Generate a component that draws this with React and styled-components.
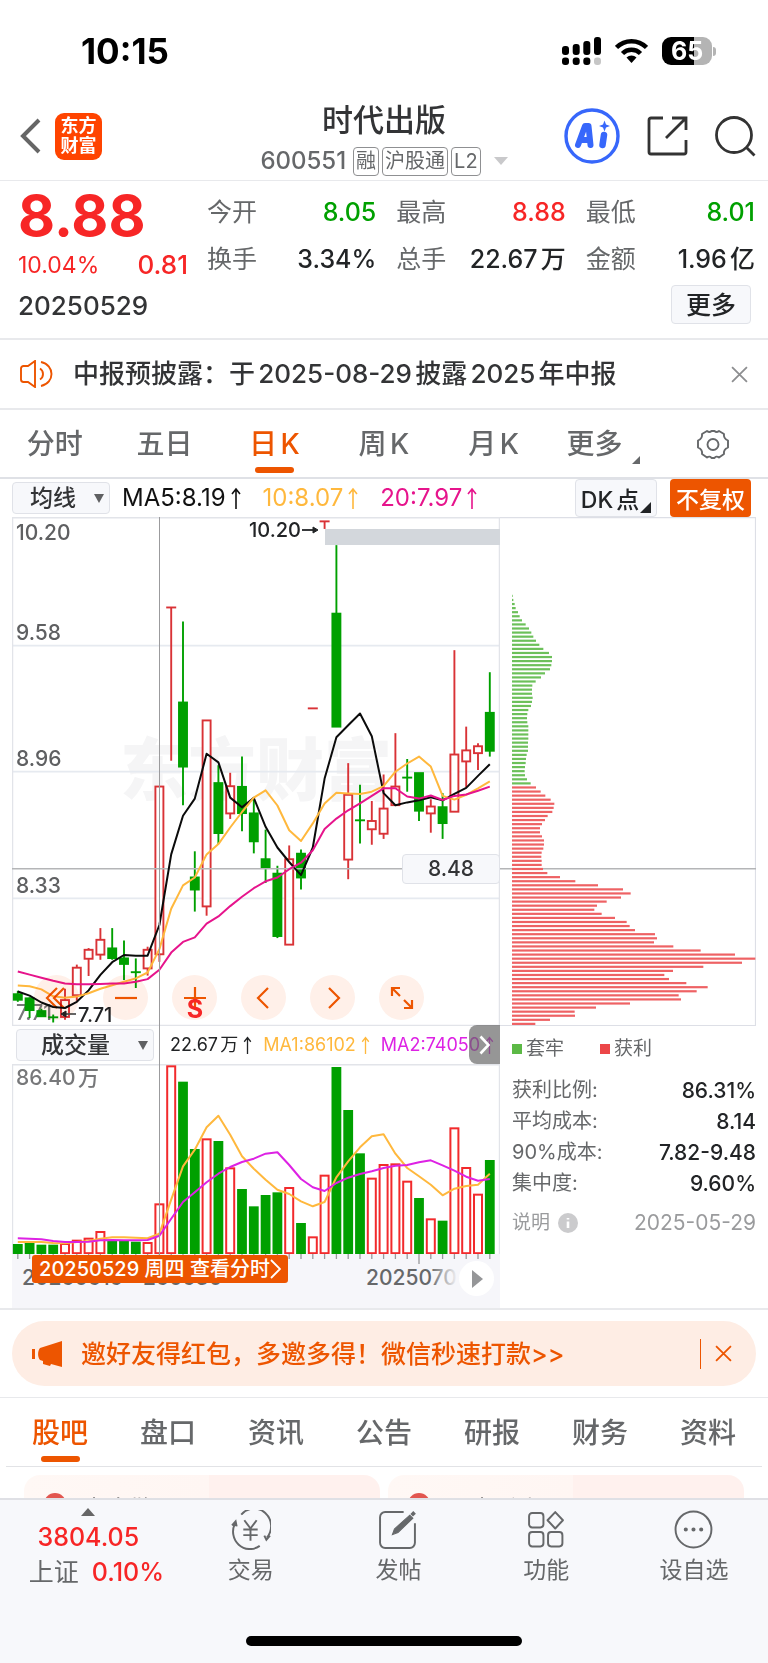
import React from "react";
import styled, { createGlobalStyle, css } from "styled-components";

const color = {
  ink: "#222426",
  text: "#333436",
  soft: "#66686a",
  faint: "#9a9b9d",
  line: "#e8e9ec",
  panel: "#f7f8fb",
  orange: "#ed5500",
  red: "#f72626",
  green: "#00a000",
  yellow: "#ffb83d",
  magenta: "#e6148c",
  violet: "#dd22e4",
};

const GlobalStyle = createGlobalStyle`
  * { box-sizing: border-box; }
  body {
    margin: 0;
    background: #fff;
    color: ${color.ink};
    font-family: Inter, "Noto Sans CJK SC", sans-serif;
    text-autospace: normal;
  }
  button, select {
    font-family: inherit;
    margin: 0;
    padding: 0;
    border: 0;
    background: none;
    color: inherit;
    cursor: pointer;
  }
  h1, h2, p, dl, dt, dd { margin: 0; font-weight: inherit; }
  svg { display: block; flex: none; }
`;

/* ---------- status bar ---------- */

const StatusBar = styled.div`
  display: flex;
  align-items: center;
  justify-content: space-between;
  height: 92px;
  padding: 10px 52px 0 81px;
`;

const Clock = styled.time`
  font-size: 35px;
  line-height: 40px;
  font-weight: 700;
  color: #000;
`;

const StatusIcons = styled.div`
  display: flex;
  align-items: center;
  gap: 14px;
`;

const BatteryWrap = styled.div`
  display: flex;
  align-items: center;
  gap: 1px;
`;

const BatteryBody = styled.span`
  width: 50px;
  height: 28px;
  border-radius: 9px;
  background: linear-gradient(90deg, #000 64%, #b4b4b4 64%);
  color: #fff;
  font-size: 25px;
  line-height: 28px;
  font-weight: 700;
  text-align: center;
`;

const BatteryCap = styled.span`
  width: 3px;
  height: 9px;
  border-radius: 0 4px 4px 0;
  background: #b4b4b4;
`;

/* ---------- header ---------- */

const Header = styled.header`
  display: grid;
  grid-template-columns: 1fr auto 1fr;
  height: 89px;
  padding: 0 12px;
  border-bottom: 1px solid ${color.line};
`;

const HeaderSide = styled.div`
  display: flex;
  align-items: center;
  gap: ${(p) => p.$gap};
  padding-left: ${(p) => (p.$end ? "0" : "8px")};
  justify-content: ${(p) => (p.$end ? "flex-end" : "flex-start")};
`;

const IconButton = styled.button`
  display: flex;
  align-items: center;
  justify-content: center;
`;

const Logo = styled.a`
  display: grid;
  place-content: center;
  width: 47px;
  height: 47px;
  border-radius: 9px;
  background: #ff4400;
  color: #fff;
  font-size: 18px;
  line-height: 20px;
  font-weight: 700;
  text-align: center;
  text-decoration: none;
`;

const TitleBlock = styled.div`
  display: flex;
  flex-direction: column;
  align-items: center;
  padding-top: 8px;
`;

const StockName = styled.h1`
  font-size: 31px;
  line-height: 40px;
  font-weight: 500;
  color: ${color.text};
`;

const StockMeta = styled.div`
  display: flex;
  align-items: center;
  gap: 3px;
  height: 30px;
  margin-top: 6px;
  color: ${color.soft};
`;

const StockCode = styled.span`
  font-size: 24px;
  line-height: 28px;
  font-weight: 500;
  margin-right: 4px;
`;

const Tag = styled.span`
  padding: 0 2px;
  border: 1px solid #8f9092;
  border-radius: 4px;
  font-size: 20px;
  line-height: 27px;
`;

const MetaArrow = styled.svg`
  margin-left: 10px;
`;

const AiBadge = styled.button`
  width: 56px;
  height: 56px;
  border-radius: 50%;
`;

/* ---------- quote ---------- */

const Quote = styled.section`
  display: grid;
  grid-template-columns: 170px minmax(0, 1fr);
  column-gap: 19px;
  height: 159px;
  padding: 8px 13px 0 18px;
  border-bottom: 2px solid ${color.line};
`;

const PriceBlock = styled.div`
  display: flex;
  flex-direction: column;
`;

const Price = styled.strong`
  font-size: 57px;
  line-height: 54px;
  font-weight: 700;
  color: ${color.red};
`;

const Change = styled.div`
  display: flex;
  justify-content: space-between;
  align-items: center;
  margin-top: 5px;
  line-height: 34px;
  font-size: 23px;
  color: ${color.red};
`;

const Delta = styled.span`
  font-size: 26px;
  font-weight: 500;
`;

const TradeDate = styled.p`
  margin-top: 8px;
  font-size: 26px;
  line-height: 32px;
  font-weight: 500;
  color: ${color.text};
`;

const QuoteRight = styled.div`
  display: flex;
  flex-direction: column;
  align-items: flex-end;
`;

const Stats = styled.dl`
  display: grid;
  grid-template-columns: repeat(3, minmax(0, 1fr));
  column-gap: 20px;
  width: 100%;
`;

const Stat = styled.div`
  display: flex;
  justify-content: space-between;
  font-size: 25px;
  line-height: 47px;
  white-space: nowrap;
`;

const StatLabel = styled.dt`
  color: ${color.soft};
`;

const StatValue = styled.dd`
  font-weight: 500;
  color: ${(p) => p.$tone || color.ink};
`;

const MoreButton = styled.button`
  width: 80px;
  height: 39px;
  margin: 2px 4px 0 0;
  border: 1px solid #e0e2e8;
  border-radius: 4px;
  background: ${color.panel};
  font-size: 25px;
  line-height: 36px;
  font-weight: 500;
`;

/* ---------- notice ---------- */

const Notice = styled.section`
  display: flex;
  align-items: center;
  height: 70px;
  padding: 0 20px;
  border-bottom: 2px solid ${color.line};
`;

const NoticeText = styled.p`
  flex: 1;
  margin-left: 20px;
  font-size: 26px;
  line-height: 36px;
  font-weight: 500;
  color: ${color.text};
`;

/* ---------- tabs ---------- */

const Tabs = styled.nav`
  display: grid;
  grid-template-columns: repeat(7, minmax(0, 1fr));
  height: 69px;
  margin: 0 ${(p) => p.$inset};
  border-bottom: ${(p) => p.$rule} solid ${(p) => p.$ruleColor};
`;

const Tab = styled.button`
  display: flex;
  flex-direction: column;
  align-items: center;
  justify-content: flex-end;
  gap: 3px;
  padding-bottom: 4px;
  font-size: 28px;
  line-height: 40px;
  font-weight: 500;
  color: ${(p) => (p.$active ? color.orange : color.soft)};

  &::after {
    content: "";
    width: 39px;
    height: 6px;
    border-radius: 3px;
    background: ${(p) => (p.$active ? color.orange : "transparent")};
  }
`;

const TabLabel = styled.span`
  display: flex;
  align-items: flex-end;
  gap: 10px;
`;

/* ---------- indicator row ---------- */

const IndicatorRow = styled.div`
  display: flex;
  align-items: center;
  height: 38px;
  padding: 0 17px 0 12px;
`;

const pickerBox = css`
  border: 1px solid #e0e2e8;
  border-radius: 4px;
  background: ${color.panel};
`;

const Picker = styled.label`
  display: flex;
  align-items: center;
  position: relative;
  flex: none;
  width: ${(p) => p.$width};
  height: 32px;
  ${pickerBox}

  select {
    appearance: none;
    width: 100%;
    height: 100%;
    padding-left: ${(p) => p.$indent};
    font-size: 23px;
    font-weight: 500;
    color: ${color.text};
  }

  svg {
    position: absolute;
    right: 5px;
    pointer-events: none;
  }
`;

const Averages = styled.div`
  display: flex;
  flex: 1;
  gap: 22px;
  margin-left: 12px;
  font-size: 24px;
  line-height: 32px;
`;

const Reading = styled.span`
  display: inline-flex;
  align-items: center;
  gap: 5px;
  white-space: nowrap;
  color: ${(p) => p.$tone};
`;

const DkButton = styled.button`
  position: relative;
  width: 82px;
  height: 38px;
  padding-right: 12px;
  font-size: 23px;
  font-weight: 500;
  white-space: nowrap;
  ${pickerBox}

  svg {
    position: absolute;
    right: 5px;
    bottom: 3px;
  }
`;

const RightsButton = styled.button`
  width: 81px;
  height: 38px;
  margin-left: 13px;
  border-radius: 4px;
  background: ${color.orange};
  color: #fff;
  font-size: 23px;
  font-weight: 500;
`;

/* ---------- chart ---------- */

const ChartGrid = styled.section`
  display: grid;
  grid-template-columns: minmax(0, 488fr) minmax(0, 256fr);
  padding: 0 12px;
  border-bottom: 2px solid ${color.line};
`;

const ChartColumn = styled.div`
  position: relative;
`;

const Plot = styled.svg`
  width: 100%;
  height: auto;
  font-family: Inter, "Noto Sans CJK SC", sans-serif;
`;

const PlotArea = styled.div`
  position: relative;
`;

const PlotControls = styled.div`
  position: absolute;
  left: 22px;
  bottom: 6px;
  display: flex;
  gap: 24px;
  mix-blend-mode: multiply;
`;

const RoundControl = styled.button`
  display: grid;
  place-items: center;
  width: 45px;
  height: 45px;
  border-radius: 50%;
  background: #fff0e9;
`;

const PriceBadge = styled.output`
  position: absolute;
  right: 0;
  top: 66.2%;
  width: 98px;
  height: 30px;
  font-size: 21px;
  line-height: 28px;
  font-weight: 500;
  text-align: center;
  color: ${color.text};
  ${pickerBox}
`;

const Crosshair = styled.i`
  position: absolute;
  top: 0;
  bottom: 54px;
  left: 30.2%;
  width: 1px;
  background: #9b9b9d;
`;

const VolumeStrip = styled.div`
  display: flex;
  align-items: center;
  height: 38px;
  padding-left: 4px;
  overflow: hidden;
`;

const VolumeReadings = styled.div`
  display: flex;
  gap: 11px;
  margin-left: 16px;
  font-size: 18px;
  line-height: 32px;
`;

const StripNext = styled.button`
  position: absolute;
  top: 508px;
  right: 0;
  display: grid;
  place-items: center;
  width: 31px;
  height: 39px;
  border-radius: 8px 0 0 8px;
  background: rgba(100, 100, 100, 0.68);
`;

const DateAxis = styled.div`
  position: relative;
  height: 54px;
  padding: 11px 10px 0;
  background: #f6f6fa;
  font-size: 21px;
  line-height: 25px;
  font-weight: 500;
  color: ${color.soft};
`;

const AxisTicks = styled.svg`
  position: absolute;
  top: 0;
  left: 0;
  width: 100%;
`;

const DateRow = styled.div`
  display: grid;
  grid-template-columns: 121px 223px auto;
`;

const DateFade = styled.div`
  position: absolute;
  top: 7px;
  right: 6px;
  width: 64px;
  height: 36px;
  padding-left: 29px;
  background: linear-gradient(90deg, rgba(246, 246, 250, 0) 0, #f6f6fa 28px);
`;

const PlayButton = styled.button`
  display: grid;
  place-items: center;
  width: 35px;
  height: 35px;
  padding-left: 2px;
  border-radius: 50%;
  background: #fff;
`;

const DayLink = styled.a`
  position: absolute;
  top: 1px;
  left: 20px;
  display: flex;
  align-items: center;
  justify-content: center;
  width: 256px;
  height: 28px;
  border-radius: 3px;
  background: ${color.orange};
  color: #fff;
  font-size: 20px;
  font-weight: 500;
  white-space: nowrap;
  text-decoration: none;
`;

const Legend = styled.div`
  display: flex;
  gap: 36px;
  padding: 9px 0 12px 12px;
  font-size: 19px;
  line-height: 28px;
  color: ${color.soft};
`;

const LegendItem = styled.span`
  display: flex;
  align-items: center;
  gap: 4px;

  &::before {
    content: "";
    width: 10px;
    height: 10px;
    background: ${(p) => p.$tone};
  }
`;

const Facts = styled.dl`
  padding-left: 12px;
`;

const Fact = styled.div`
  display: flex;
  align-items: center;
  justify-content: space-between;
  margin-top: ${(p) => (p.$muted ? "9px" : "0")};
  font-size: ${(p) => (p.$muted ? "19px" : "20px")};
  line-height: ${(p) => (p.$muted ? "30px" : "31px")};
  color: ${(p) => (p.$muted ? color.faint : color.soft)};
`;

const FactLabel = styled.dt`
  display: flex;
  align-items: center;
  gap: 8px;
`;

const FactValue = styled.dd`
  font-size: 21px;
  font-weight: ${(p) => (p.$muted ? 400 : 500)};
  color: ${(p) => (p.$muted ? color.faint : color.ink)};
`;

/* ---------- promo ---------- */

const Promo = styled.section`
  padding: 11px 12px;
  border-bottom: 1px solid ${color.line};
`;

const PromoPill = styled.div`
  display: flex;
  align-items: center;
  height: 65px;
  padding: 0 24px 0 20px;
  border-radius: 33px;
  background: #feede4;
  color: ${color.orange};
`;

const PromoText = styled.a`
  flex: 1;
  margin-left: 17px;
  font-size: 25px;
  line-height: 36px;
  font-weight: 500;
  color: inherit;
  text-decoration: none;
`;

const PromoClose = styled.button`
  display: flex;
  align-items: center;
  height: 30px;
  padding-left: 14px;
  border-left: 1px solid ${color.orange};
`;

/* ---------- feed ---------- */

const Feed = styled.section`
  display: grid;
  grid-template-columns: 1fr 1fr;
  gap: 8px;
  height: 31px;
  padding: 8px 24px 0;
  overflow: hidden;
`;

const FeedCard = styled.article`
  display: flex;
  align-items: center;
  gap: 16px;
  height: 70px;
  padding: 0 20px;
  border-radius: 16px;
  background: linear-gradient(90deg, #fff8f5 0, #fff6f3 52%, #fff1ee 52%);
  font-size: 24px;
  line-height: 36px;
  color: ${color.text};

  &::before {
    content: "";
    width: 22px;
    height: 34px;
    border-radius: 11px;
    background: #e2564f;
  }
`;

/* ---------- bottom bar ---------- */

const BottomBar = styled.footer`
  height: 166px;
  border-top: 2px solid #dfe0e5;
  background: ${color.panel};
`;

const BottomItems = styled.nav`
  display: grid;
  grid-template-columns: 177fr repeat(4, 148fr);
  height: 136px;
`;

const IndexQuote = styled.button`
  display: flex;
  flex-direction: column;
  align-items: center;
  padding-top: 8px;
  font-size: 25px;
  line-height: 35px;
  font-weight: 500;
  color: ${color.red};

  svg { margin-bottom: 4px; }
`;

const IndexName = styled.span`
  margin-right: 10px;
  font-weight: 400;
  color: ${color.soft};
`;

const IndexChange = styled.span`
  padding-left: 16px;
  white-space: nowrap;
`;

const BottomItem = styled.button`
  display: flex;
  flex-direction: column;
  align-items: center;
  gap: 3px;
  padding-top: 10px;
  font-size: 23px;
  line-height: 34px;
  color: ${color.soft};
`;

const HomeIndicator = styled.div`
  width: 36%;
  height: 10px;
  margin: 0 auto;
  border-radius: 5px;
  background: #000;
`;

/* ---------- data ---------- */

const stats = [
  ["今开", "8.05", color.green],
  ["最高", "8.88", color.red],
  ["最低", "8.01", color.green],
  ["换手", "3.34%"],
  ["总手", "22.67万"],
  ["金额", "1.96亿"],
];

// direction, high, body top, body bottom, low
const candles = [
  ["d", 1396, 1406, 1422, 1428], ["d", 1415, 1418, 1452, 1475], ["d", 1448, 1455, 1470, 1470],
  ["x", 1465, 1473, 1473, 1488], ["u", 1390, 1423, 1472, 1480], ["u", 1320, 1329, 1409, 1425],
  ["u", 1272, 1277, 1303, 1353], ["u", 1214, 1248, 1291, 1306], ["d", 1214, 1273, 1301, 1306],
  ["d", 1250, 1302, 1318, 1365], ["x", 1302, 1342, 1342, 1388], ["u", 1268, 1277, 1331, 1352],
  ["u", 803, 803, 1290, 1312], ["t", 283, 283, 283, 728], ["d", 324, 559, 745, 857],
  ["d", 991, 1067, 1102, 1166], ["u", 611, 611, 1151, 1178], ["d", 741, 793, 938, 970],
  ["u", 763, 802, 881, 897], ["d", 716, 804, 880, 933], ["d", 835, 881, 962, 997],
  ["d", 928, 1014, 1038, 1083], ["d", 1033, 1056, 1237, 1243], ["u", 974, 1014, 1262, 1262],
  ["d", 986, 998, 1067, 1102], ["t", 576, 576, 576, 576], ["t", 33, 33, 33, 55],
  ["d", 102, 301, 629, 629], ["u", 735, 827, 1015, 1072], ["x", 798, 901, 901, 968],
  ["u", 845, 903, 927, 972], ["u", 768, 867, 940, 955], ["u", 648, 803, 857, 857],
  ["x", 723, 777, 777, 818], ["d", 764, 764, 873, 903], ["u", 840, 861, 881, 937],
  ["d", 822, 863, 909, 955], ["u", 407, 710, 876, 876], ["u", 629, 698, 730, 805],
  ["u", 677, 686, 706, 755], ["d", 471, 589, 699, 716],
];

const ma5 = [1398, 1410, 1430, 1443, 1446, 1428, 1395, 1350, 1313, 1292, 1294, 1294, 1205, 1000, 888, 838, 708, 733, 835, 863, 836, 920, 980, 1022, 1060, 980, 780, 660, 625, 591, 657, 822, 857, 849, 843, 834, 843, 824, 807, 772, 738];
const ma10 = [1381, 1383, 1392, 1412, 1416, 1413, 1403, 1390, 1380, 1370, 1360, 1343, 1275, 1158, 1090, 1067, 1000, 970, 922, 877, 835, 814, 858, 930, 961, 910, 852, 821, 823, 825, 818, 802, 760, 736, 716, 745, 830, 841, 827, 808, 788];
const ma20 = [1340, 1349, 1358, 1367, 1375, 1377, 1377, 1376, 1375, 1375, 1370, 1362, 1335, 1285, 1254, 1241, 1201, 1180, 1150, 1123, 1098, 1078, 1067, 1043, 1024, 988, 926, 896, 872, 852, 830, 808, 808, 832, 838, 829, 842, 830, 826, 815, 803];

const volumes = [
  "d673", "d670", "d675", "d675", "u670", "u660", "u654", "u634", "d664", "d664", "d666", "u667", "u551", "u137",
  "d186", "d388", "u356", "d364", "u443", "d508", "d560", "d526", "d518", "u502", "d610", "u650", "u465", "d142",
  "d271", "d401", "u474", "u433", "u431", "u483", "d535", "u596", "d603", "u323", "u442", "u522", "d421",
];
const volMa1 = [667, 667, 667, 670, 671, 667, 664, 657, 653, 653, 654, 656, 642, 540, 440, 390, 323, 288, 345, 410, 447, 480, 510, 523, 545, 560, 547, 473, 425, 383, 350, 344, 402, 445, 470, 495, 527, 507, 499, 495, 462];
const volMa2 = [656, 657, 659, 664, 667, 667, 666, 662, 661, 662, 662, 661, 648, 597, 547, 518, 488, 462, 442, 427, 417, 402, 398, 436, 478, 503, 514, 490, 474, 463, 455, 445, 438, 436, 428, 422, 437, 453, 471, 483, 478];

const trapped = [2, 4, 8, 11, 18, 23, 30, 41, 51, 58, 64, 72, 82, 94, 111, 120, 120, 118, 114, 99, 87, 71, 61, 60, 60, 62, 60, 57, 49, 46, 45, 46, 49, 49, 49, 49, 48, 48, 48, 44, 42, 41, 39, 38, 39, 45, 56];
const profit = [72, 86, 100, 116, 127, 125, 121, 107, 99, 90, 84, 84, 90, 96, 96, 94, 89, 88, 89, 89, 93, 106, 144, 190, 258, 333, 356, 327, 284, 255, 247, 269, 309, 344, 353, 369, 429, 435, 426, 484, 566, 669, 730, 690, 574, 483, 457, 471, 523, 587, 554, 500, 507, 354, 252, 188, 189, 114, 70];

const facts = [
  ["获利比例:", "86.31%"],
  ["平均成本:", "8.14"],
  ["90%成本:", "7.82-9.48"],
  ["集中度:", "9.60%"],
];

const barX = (i) => 5.8 + i * 11.8;
const priceY = (v) => v * 0.3444 - 7;
const volY = (v) => (v - 133) / 3;
const path = (values, y) => values.map((v, i) => `${barX(i).toFixed(1)},${y(v).toFixed(1)}`).join(" ");

/* ---------- drawings ---------- */

const Caret = () => (
  <svg width="10" height="9" viewBox="0 0 10 9"><path d="M0 0h10L5 9z" fill="#5f6062" /></svg>
);

const CornerMark = ({ size, fill }) => (
  <svg width={size} height={size} viewBox="0 0 10 10"><path d="M10 0v10H0z" fill={fill} /></svg>
);

const UpArrow = ({ h = 22, w = 10 }) => (
  <svg width={w} height={h} viewBox="0 0 10 22" fill="none" stroke="currentColor" strokeWidth="1.6">
    <path d="M5 22V2M1 7l4-5 4 5" />
  </svg>
);

const Cross = ({ size = 16, tone }) => (
  <svg width={size} height={size} viewBox="0 0 16 16" stroke={tone} strokeWidth="1.7"><path d="M1 1l14 14M15 1L1 15" /></svg>
);

function PricePlot() {
  const red = "#d93236";
  return (
    <Plot viewBox="0 0 488 509" role="img" aria-label="日K线图">
      <text x="108" y="278" fontSize="68" fontWeight="900" fill="#f5f5f6">东方财富</text>
      <g stroke="#e6eaf0" strokeWidth="1.8">
        <path d="M0 128.7H488M0 254.7H488M0 381.4H488" />
        <path d="M0 .7H488M.5 0V509M487.5 0V509M0 508.5H488" stroke="#e2e4e9" strokeWidth="1.5" />
      </g>
      <rect x="313" y="12" width="175" height="16" fill="#d3d7dc" />
      <g fontSize="21" fontWeight="500" fill="#5f6062">
        <text x="4" y="23">10.20</text>
        <text x="4" y="123">9.58</text>
        <text x="4" y="249">8.96</text>
        <text x="4" y="376">8.33</text>
        <text x="4" y="503" fill="#77787a">7.71</text>
      </g>
      {candles.map(([kind, high, top, bottom, low], i) => {
        const x = barX(i);
        const up = kind === "u" || kind === "t";
        const tone = up ? red : color.green;
        const flat = kind === "x" || kind === "t";
        return (
          <g key={i} stroke={tone} strokeWidth="1.9" fill={up ? "#fff" : tone}>
            {low > high && <path d={`M${x} ${priceY(high)}V${priceY(low)}`} />}
            {flat && <path d={`M${x - 5} ${priceY(top)}h10`} />}
            {!flat && <rect x={x - 4} y={priceY(top)} width="8" height={priceY(bottom) - priceY(top)} />}
          </g>
        );
      })}
      <path d="M0 351.8H488" stroke="#b4b5b7" strokeWidth="1.5" />
      <g fill="none" strokeWidth="2" strokeLinejoin="round">
        <polyline points={path(ma5, priceY)} stroke="#0b0b0b" />
        <polyline points={path(ma10, priceY)} stroke={color.yellow} />
        <polyline points={path(ma20, priceY)} stroke={color.magenta} />
      </g>
      <g fontSize="20" fontWeight="500" fill={color.ink}>
        <text x="237" y="20">10.20</text>
        <text x="66" y="505">7.71</text>
      </g>
      <g stroke={color.ink} strokeWidth="1.8" fill={color.ink}>
        <path d="M290 13H303" />
        <path d="M301 10l5 3-5 3z" strokeWidth="1" />
        <path d="M64 497H54" stroke="#555" />
        <path d="M54 494l-5 3 5 3z" strokeWidth="1" />
      </g>
    </Plot>
  );
}

function VolumePlot() {
  return (
    <Plot viewBox="0 0 488 190" role="img" aria-label="成交量">
      <path d="M0 .7H488M.5 0V190M487.5 0V190" stroke="#e2e4e9" strokeWidth="1.4" />
      <text x="4" y="21" fontSize="21" fontWeight="500" fill="#77787a">86.40万</text>
      {volumes.map((v, i) => {
        const up = v[0] === "u";
        const y = volY(Number(v.slice(1)));
        return up ? (
          <rect key={i} x={barX(i) - 4} y={y + 1} width="8" height={188.2 - y} fill="#fff" stroke="#f22a2c" strokeWidth="2" />
        ) : (
          <rect key={i} x={barX(i) - 4.9} y={y} width="9.8" height={190 - y} fill={color.green} />
        );
      })}
      <g fill="none" strokeWidth="2" strokeLinejoin="round">
        <polyline points={path(volMa1, volY)} stroke={color.yellow} />
        <polyline points={path(volMa2, volY)} stroke={color.violet} />
      </g>
    </Plot>
  );
}

function CostPlot() {
  return (
    <Plot viewBox="0 0 256 509" role="img" aria-label="筹码分布">
      <path d="M0 .7H255.5V508.5H0" fill="none" stroke="#dddfe6" strokeWidth="1.2" />
      <path d="M0 351.8H256" stroke="#b4b5b7" strokeWidth="1.5" />
      {[...trapped, ...profit].map((w, i) => (
        <rect key={i} x="12" y={77.8 + i * 4.076} width={w / 3} height="2.2" fill={i < trapped.length ? "#6cc05a" : "#ee6264"} />
      ))}
    </Plot>
  );
}

const controls = [
  ["最左", <path key="p" d="M12 2L2 12l10 10M19 2L9 12l10 10" />],
  ["缩小", <path key="p" d="M1 12h22" />],
  ["放大", <path key="p" d="M1 12h22M12 1v22" />],
  ["向左", <path key="p" d="M16 2L6 12l10 10" />],
  ["向右", <path key="p" d="M8 2l10 10L8 22" />],
  ["全屏", <path key="p" d="M10 2H2v8M2 2l8 8M22 14v8h-8M14 14l8 8" />],
];

const bottomItems = [
  ["交易", <g key="g"><path d="M10 4.5A16.5 17 0 0 1 35 27M28 35A16.5 17 0 0 1 4 13M1 15l3.500-4 1 5M38 25l-3.500 4-2-4" /><path d="M13 10l6 8 6-8M12 19h14M12 24.500h14M19 18v12" /></g>],
  ["发帖", <g key="g"><path d="M25 2H7a5 5 0 0 0-5 5v25a5 5 0 0 0 5 5h24a5 5 0 0 0 5-5V13" /><path d="M14 24l2-5.500L31 5l3 3-14.500 14z" fill="currentColor" strokeWidth="1" /><path d="M33 2.500l2.500 2.500" strokeWidth="4" /></g>],
  ["功能", <g key="g"><rect x="3" y="3" width="14" height="14" rx="3" /><rect x="3" y="21.500" width="14" height="14" rx="3" /><rect x="21.500" y="21.500" width="14" height="14" rx="3" /><path d="M28.500 2l7.500 8-7.500 8-7.500-8z" strokeLinejoin="round" /></g>],
  ["设自选", <g key="g"><circle cx="19" cy="19" r="17.500" /><path d="M11.500 19h.01M19 19h.01M26.500 19h.01" strokeWidth="4" strokeLinecap="round" /></g>],
];

export default function App() {
  return (
    <>
      <GlobalStyle />
      <StatusBar>
        <Clock>10:15</Clock>
        <StatusIcons>
          <svg width="39" height="28" viewBox="0 0 39 28">
            <g fill="#000">
              <rect x="0" y="9" width="7" height="9" rx="3" /><rect x="10.700" y="7" width="7" height="11" rx="3" />
              <rect x="21.300" y="4" width="7" height="14" rx="3" /><rect x="32" y="0" width="7" height="18" rx="3" />
              <rect x="0" y="20.500" width="7" height="7.500" rx="3" /><rect x="10.700" y="20.500" width="7" height="7.500" rx="3" />
              <rect x="21.300" y="20.500" width="7" height="7.500" rx="3" />
            </g>
            <rect x="32" y="20.500" width="7" height="7.500" rx="3" fill="#c6c6c6" />
          </svg>
          <svg width="33" height="26" viewBox="0 0 33 26" fill="none" stroke="#000" strokeWidth="4.500">
            <path d="M1.500 9.500a21 21 0 0 1 30 0M7.500 15.500a12.700 12.700 0 0 1 18 0" />
            <path d="M16.500 25l-5-5.500a7.500 7.500 0 0 1 10 0z" fill="#000" stroke="none" />
          </svg>
          <BatteryWrap>
            <BatteryBody>65</BatteryBody>
            <BatteryCap />
          </BatteryWrap>
        </StatusIcons>
      </StatusBar>

      <Header>
        <HeaderSide $gap="14px">
          <IconButton aria-label="返回">
            <svg width="21" height="36" viewBox="0 0 21 36" fill="none" stroke="#666" strokeWidth="4"><path d="M19 2L3 18l16 16" /></svg>
          </IconButton>
          <Logo href="#home">东方<br />财富</Logo>
        </HeaderSide>
        <TitleBlock>
          <StockName>时代出版</StockName>
          <StockMeta>
            <StockCode>600551</StockCode>
            <Tag>融</Tag>
            <Tag>沪股通</Tag>
            <Tag>L2</Tag>
            <MetaArrow width="14" height="8" viewBox="0 0 14 8"><path d="M0 0h14L7 8z" fill="#c9c9cb" /></MetaArrow>
          </StockMeta>
        </TitleBlock>
        <HeaderSide $gap="27px" $end>
          <AiBadge aria-label="Ai">
            <svg width="56" height="56" viewBox="0 0 56 56" fill="none" stroke="#3767fb">
              <circle cx="28" cy="28" r="26" strokeWidth="3.400" />
              <path d="M14 37l7-19h3.500l2 19M17 32h9" strokeWidth="6" strokeLinejoin="round" strokeLinecap="round" />
              <path d="M40 27l-1.500 10" strokeWidth="6.500" strokeLinecap="round" />
              <path d="M40.500 12.500l1.500 4 4 1.500-4 1.500-1.500 4-1.500-4-4-1.500 4-1.500z" fill="#3767fb" stroke="none" />
            </svg>
          </AiBadge>
          <IconButton aria-label="分享">
            <svg width="41" height="40" viewBox="0 0 41 40" fill="none" stroke="#333" strokeWidth="2.800">
              <path d="M16 2H4a2 2 0 0 0-2 2v32a2 2 0 0 0 2 2h33a2 2 0 0 0 2-2V24M25 2h14v12M39 2L19 22" />
            </svg>
          </IconButton>
          <IconButton aria-label="搜索">
            <svg width="41" height="42" viewBox="0 0 41 42" fill="none" stroke="#333" strokeWidth="2.800">
              <circle cx="19" cy="20" r="17.500" /><path d="M31 32l8.500 8.500" />
            </svg>
          </IconButton>
        </HeaderSide>
      </Header>

      <main>
        <Quote>
          <PriceBlock>
            <Price>8.88</Price>
            <Change><span>10.04%</span><Delta>0.81</Delta></Change>
            <TradeDate>20250529</TradeDate>
          </PriceBlock>
          <QuoteRight>
            <Stats>
              {stats.map(([label, value, tone]) => (
                <Stat key={label}>
                  <StatLabel>{label}</StatLabel>
                  <StatValue $tone={tone}>{value}</StatValue>
                </Stat>
              ))}
            </Stats>
            <MoreButton>更多</MoreButton>
          </QuoteRight>
        </Quote>

        <Notice>
          <svg width="33" height="28" viewBox="0 0 33 28" fill="none" stroke={color.orange} strokeWidth="1.900">
            <path d="M15 1v26l-7-5H3.500a2.500 2.500 0 0 1-2.500-2.500v-11A2.500 2.500 0 0 1 3.500 6H8zM20 8.500c4 2.500 4 8.500 0 11M21 2c14 3 14 21 0 24" />
          </svg>
          <NoticeText>中报预披露：于2025-08-29披露2025年中报</NoticeText>
          <IconButton aria-label="关闭公告"><Cross size={17} tone="#8d8e90" /></IconButton>
        </Notice>

        <Tabs $inset="0" $rule="2px" $ruleColor="#dfe1e6" aria-label="周期">
          {["分时", "五日", "日K", "周K", "月K"].map((t) => (
            <Tab key={t} $active={t === "日K"}>{t}</Tab>
          ))}
          <Tab><TabLabel>更多<CornerMark size={8} fill={color.soft} /></TabLabel></Tab>
          <Tab aria-label="设置">
            <svg width="40" height="38" viewBox="0 0 40 36" fill="none" stroke={color.soft} strokeWidth="1.900" strokeLinejoin="round">
              <path d="M14 4c2 1.500 3.500 1 4.500 0h3c1 1 2.500 1.500 4.500 0l5 3c-.5 3 .5 5 4 6.500v7c-3.500 1.500-4.500 3.500-4 6.500l-5 3.500c-2-1.500-3.500-1-4.500.5h-3c-1-1.500-2.500-2-4.500-.5l-5-3.500c.5-3-.5-5-4-6.500v-7c3.500-1.500 4.500-3.500 4-6.500z" />
              <circle cx="20" cy="17.500" r="5.500" />
            </svg>
          </Tab>
        </Tabs>

        <IndicatorRow>
          <Picker $width="98px" $indent="17px">
            <select aria-label="主图指标" defaultValue="均线"><option>均线</option></select>
            <Caret />
          </Picker>
          <Averages>
            <Reading $tone="#111">MA5:8.19<UpArrow /></Reading>
            <Reading $tone={color.yellow}>10:8.07<UpArrow /></Reading>
            <Reading $tone={color.magenta}>20:7.97<UpArrow /></Reading>
          </Averages>
          <DkButton>DK点<CornerMark size={11} fill={color.ink} /></DkButton>
          <RightsButton>不复权</RightsButton>
        </IndicatorRow>

        <ChartGrid>
          <ChartColumn>
            <PlotArea>
              <PricePlot />
              <PriceBadge>8.48</PriceBadge>
              <PlotControls>
                {controls.map(([label, icon], i) => (
                  <RoundControl key={label} aria-label={label}>
                    <svg width="24" height="24" viewBox="0 0 24 24" fill="none" stroke={color.orange} strokeWidth="2.200" overflow="visible">
                      {icon}
                      {i === 2 && (
                        <text x="12" y="32" fontSize="25" fontWeight="700" fill={color.red} stroke="none" textAnchor="middle">S</text>
                      )}
                    </svg>
                  </RoundControl>
                ))}
              </PlotControls>
            </PlotArea>
            <VolumeStrip>
              <Picker $width="138px" $indent="24px">
                <select aria-label="副图指标" defaultValue="成交量"><option>成交量</option></select>
                <Caret />
              </Picker>
              <VolumeReadings>
                <Reading $tone={color.ink}>22.67万<UpArrow w={9} h={18} /></Reading>
                <Reading $tone={color.yellow}>MA1:86102<UpArrow w={9} h={18} /></Reading>
                <Reading $tone={color.violet}>MA2:74050<UpArrow w={9} h={18} /></Reading>
              </VolumeReadings>
            </VolumeStrip>
            <VolumePlot />
            <Crosshair />
            <StripNext aria-label="更多指标">
              <svg width="11" height="20" viewBox="0 0 11 20" fill="none" stroke="#fff" strokeWidth="2.600"><path d="M1.500 1.500L9.500 10l-8 8.500" /></svg>
            </StripNext>
            <DateAxis>
              <AxisTicks viewBox="0 0 488 10" stroke="#98999c" strokeWidth="1.300">
                {volumes.map((_, i) => (
                  <path key={i} d={`M${barX(i)} 0v${i === 34 ? 10 : 5}`} />
                ))}
              </AxisTicks>
              <DateRow><span>20250515</span><span>250530</span><span>2025070</span></DateRow>
              <DateFade>
                <PlayButton aria-label="播放">
                  <svg width="11" height="18" viewBox="0 0 11 18"><path d="M0 0l11 9-11 9z" fill="#959698" /></svg>
                </PlayButton>
              </DateFade>
              <DayLink href="#day">20250529 周四 查看分时
                <svg width="11" height="20" viewBox="0 0 11 20" fill="none" stroke="#fff" strokeWidth="1.800"><path d="M1 1l9 9-9 9" /></svg>
              </DayLink>
            </DateAxis>
          </ChartColumn>

          <div>
            <CostPlot />
            <Legend>
              <LegendItem $tone="#5cb946">套牢</LegendItem>
              <LegendItem $tone="#ec4648">获利</LegendItem>
            </Legend>
            <Facts>
              {facts.map(([label, value]) => (
                <Fact key={label}>
                  <FactLabel>{label}</FactLabel>
                  <FactValue>{value}</FactValue>
                </Fact>
              ))}
              <Fact $muted>
                <FactLabel>
                  说明
                  <svg width="20" height="20" viewBox="0 0 20 20">
                    <circle cx="10" cy="10" r="10" fill="#cbcbcd" />
                    <path d="M10 5v1.500M10 8.500V15" stroke="#fff" strokeWidth="2.600" />
                  </svg>
                </FactLabel>
                <FactValue $muted>2025-05-29</FactValue>
              </Fact>
            </Facts>
          </div>
        </ChartGrid>

        <Promo>
          <PromoPill>
            <svg width="32" height="28" viewBox="0 0 32 28" fill={color.orange}>
              <path d="M0 9h3v10H0zM8 8L30 1v26l-11-3-1 2-7-2v-3L8 20c-2.500-3-2.500-9 0-12z" />
            </svg>
            <PromoText href="#invite">邀好友得红包，多邀多得！微信秒速打款&gt;&gt;</PromoText>
            <PromoClose aria-label="关闭活动"><Cross size={17} tone={color.orange} /></PromoClose>
          </PromoPill>
        </Promo>

        <Tabs $inset="6px" $rule="1px" $ruleColor="#e2e3e6" aria-label="栏目">
          {["股吧", "盘口", "资讯", "公告", "研报", "财务", "资料"].map((t) => (
            <Tab key={t} $active={t === "股吧"}>{t}</Tab>
          ))}
        </Tabs>

        <Feed>
          <FeedCard>大牛散</FeedCard>
          <FeedCard>个大看点</FeedCard>
        </Feed>
      </main>

      <BottomBar>
        <BottomItems aria-label="底部导航">
          <IndexQuote>
            <svg width="14" height="8" viewBox="0 0 14 8"><path d="M7 0l7 8H0z" fill="#666" /></svg>
            <span>3804.05</span>
            <IndexChange><IndexName>上证</IndexName>0.10%</IndexChange>
          </IndexQuote>
          {bottomItems.map(([label, icon]) => (
            <BottomItem key={label}>
              <svg width="40" height="40" viewBox="0 0 39 39" fill="none" stroke="currentColor" strokeWidth="1.900">{icon}</svg>
              {label}
            </BottomItem>
          ))}
        </BottomItems>
        <HomeIndicator />
      </BottomBar>
    </>
  );
}
